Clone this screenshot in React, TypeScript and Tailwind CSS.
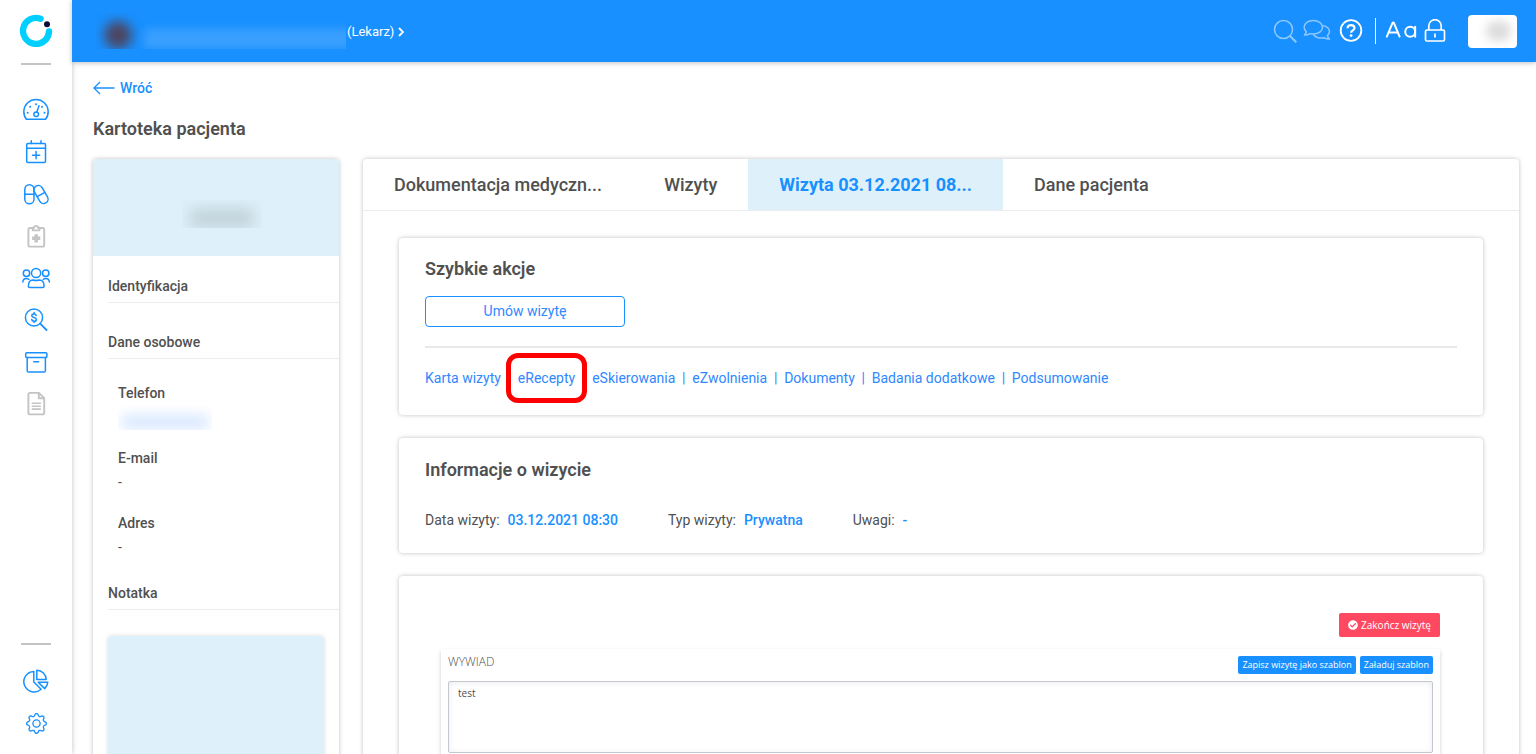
import { ReactNode, useState } from "react";
import { CaseSensitive } from "lucide-react";
import { BsGear } from "react-icons/bs";
import { FaCheckCircle } from "react-icons/fa";

function NavIcon({ children, muted }: { children: ReactNode; muted?: boolean }) {
  return (
    <svg
      viewBox="0 0 28 28"
      className={`size-7 ${muted ? "text-[#c4c4c4]" : "text-[#1890ff]"}`}
      fill="none"
      stroke="currentColor"
      strokeWidth={muted ? 1.9 : 1.5}
      strokeLinecap="round"
      strokeLinejoin="round"
      aria-hidden="true"
    >
      {children}
    </svg>
  );
}

const navItems = [
  {
    label: "Pulpit",
    icon: (
      <NavIcon>
        <path d="M4.4 23.3A12.2 12.2 0 1 1 23.6 23.3Z" />
        <circle cx="14.2" cy="18.2" r="2.3" />
        <path d="M14.9 15.8L17 9.7" />
        <g fill="currentColor" stroke="none">
          <circle cx="5.7" cy="16.7" r="1" />
          <circle cx="8.1" cy="10.8" r="1" />
          <circle cx="14" cy="8.3" r="1" />
          <circle cx="20" cy="10.8" r="1" />
          <circle cx="22.5" cy="16.7" r="1" />
        </g>
      </NavIcon>
    ),
  },
  {
    label: "Terminarz",
    icon: (
      <NavIcon>
        <rect x="4.7" y="5.6" width="18.8" height="18.8" rx="1.2" />
        <path d="M4.7 10.2h18.8M9.3 2.8v2.8M19 2.8v2.8M14.1 13.6v7.2M10.5 17.2h7.2" />
      </NavIcon>
    ),
  },
  {
    label: "Leki",
    icon: (
      <NavIcon>
        <rect x="2.8" y="4.8" width="9.2" height="19" rx="4.6" />
        <path d="M2.8 14.3h9.2" />
        <g transform="rotate(-30 19 14.5)">
          <rect x="14.6" y="4.8" width="8.8" height="19.4" rx="4.4" />
          <path d="M14.6 14.5h8.8" />
        </g>
      </NavIcon>
    ),
  },
  {
    label: "Zlecenia",
    icon: (
      <NavIcon muted>
        <rect x="6.4" y="6" width="15.8" height="18.6" rx="1.6" />
        <path d="M10.8 8.4V5.8h1.4a1.9 1.9 0 0 1 3.8 0h1.4v2.6z" fill="white" />
        <path d="M14.2 12.2v8.2M10.1 16.3h8.2" strokeWidth="3.4" strokeLinecap="butt" />
      </NavIcon>
    ),
  },
  {
    label: "Pacjenci",
    icon: (
      <NavIcon>
        <circle cx="14.1" cy="9" r="4.6" />
        <path d="M6.4 22.2c0-4.2 1.6-6.2 4.6-6.2 1.8.6 4.4.6 6.2 0 3 0 4.9 2 4.9 6.2 0 .9-.5 1.4-1.4 1.4H7.8c-.9 0-1.4-.5-1.4-1.4z" />
        <circle cx="4.5" cy="9.3" r="3.2" />
        <circle cx="23.7" cy="9.3" r="3.2" />
        <path d="M.8 18c.3-2.3 1.5-3.5 3.4-3.5 1.1 0 1.9.2 2.7.8M27.4 18c-.3-2.3-1.5-3.5-3.4-3.5-1.1 0-1.9.2-2.7.8" />
      </NavIcon>
    ),
  },
  {
    label: "Rozliczenia",
    icon: (
      <NavIcon>
        <circle cx="12" cy="11.5" r="8.6" />
        <path d="M18.2 17.7l6.3 6.3" strokeWidth="1.8" />
        <path d="M14.2 9.5c-.2-1-1-1.5-2.200-1.5-1.300 0-2.200.6-2.200 1.700 0 2.500 4.600 1.200 4.600 3.700 0 1.100-.9 1.800-2.300 1.800-1.300 0-2.200-.6-2.400-1.700M12.1 6.600V8M12.1 15.200v1.400" />
      </NavIcon>
    ),
  },
  {
    label: "Archiwum",
    icon: (
      <NavIcon>
        <rect x="3.7" y="4.8" width="21.2" height="4.7" rx="1" />
        <path d="M5.2 9.5v13.2c0 .8.5 1.3 1.3 1.3h15.6c.8 0 1.3-.5 1.3-1.3V9.5M11.8 13.7h4.8" />
      </NavIcon>
    ),
  },
  {
    label: "Dokumenty",
    icon: (
      <NavIcon muted>
        <path d="M17 2.9H8c-1 0-1.6.6-1.6 1.6v18.3c0 1 .6 1.6 1.6 1.6h12.6c1 0 1.6-.6 1.6-1.6V8.2zM16.8 3v5.3h5.3" />
        <path d="M10.3 13.3h8M10.3 16.2h8M10.3 19.1h8" strokeWidth="1.6" />
      </NavIcon>
    ),
  },
];

const bottomItems = [
  {
    label: "Raporty",
    icon: (
      <NavIcon>
        <path d="M11.8 4.4V15l7.3 7.3A10.3 10.3 0 1 1 11.8 4.4z" />
        <path d="M14.8 3.2v9.4h9.4a9.4 9.4 0 0 0-9.4-9.4z" />
        <path d="M16.2 15.3h9.6c-.2 2.5-1.3 4.6-3.1 6.300z" />
      </NavIcon>
    ),
  },
  { label: "Ustawienia", icon: <BsGear size={21} className="text-[#1890ff]" /> },
];

const tabs = ["Dokumentacja medyczn...", "Wizyty", "Wizyta 03.12.2021 08...", "Dane pacjenta"];

const quickLinks = [
  "Karta wizyty",
  "eRecepty",
  "eSkierowania",
  "eZwolnienia",
  "Dokumenty",
  "Badania dodatkowe",
  "Podsumowanie",
];

const visitInfo = [
  { label: "Data wizyty:", value: "03.12.2021 08:30" },
  { label: "Typ wizyty:", value: "Prywatna" },
  { label: "Uwagi:", value: "-" },
];

function Sidebar() {
  return (
    <aside className="z-10 flex w-18 shrink-0 flex-col items-center bg-white shadow-[0_0_5px_rgba(0,0,0,0.25)]">
      <svg viewBox="0 0 34 34" className="mt-3.5 size-[34px] shrink-0" aria-hidden="true">
        <path d="M21.5 4.7A13 13 0 1 0 30 17.5" fill="none" stroke="#00cfff" strokeWidth="6.4" strokeLinecap="round" />
        <circle cx="28" cy="10.3" r="3" fill="#0b0b33" />
      </svg>
      <div className="mt-[15px] h-0.5 w-[30px] shrink-0 bg-[#c4c4c4]" />
      <nav className="mt-[31px] flex flex-col gap-3.5">
        {navItems.map((item) => (
          <a key={item.label} href="#" aria-label={item.label}>
            {item.icon}
          </a>
        ))}
      </nav>
      <div className="mt-auto h-0.5 w-[30px] shrink-0 bg-[#c4c4c4]" />
      <nav className="mt-[22px] mb-[17px] flex flex-col gap-3.5">
        {bottomItems.map((item) => (
          <a key={item.label} href="#" aria-label={item.label} className="flex size-7 items-center justify-center">
            {item.icon}
          </a>
        ))}
      </nav>
    </aside>
  );
}

function Header() {
  return (
    <header className="z-10 flex h-[62px] shrink-0 items-center bg-[#1890ff] pr-[19px] pl-6 text-white shadow-[0_1px_5px_rgba(0,0,0,0.25)]">
      {/* Blurred avatar and name */}
      <div className="flex h-9 w-[250px] items-end overflow-hidden">
        <div className="ml-2 size-7 shrink-0 rounded-full bg-[#4d4560] blur-[6px]" />
        <div className="ml-3 -mr-2 h-5 grow bg-white/15 blur-[5px]" />
      </div>
      <button type="button" className="flex items-center gap-1 pt-px pl-px text-[13px]">
        (Lekarz)
        <svg viewBox="0 0 6 10" className="h-2.5 w-1.5" fill="none" stroke="currentColor" strokeWidth="1.8" aria-hidden="true">
          <path d="M1 1l4 4-4 4" />
        </svg>
      </button>
      <div className="ml-auto flex items-center">
        <button type="button" aria-label="Szukaj" className="mr-1.5 opacity-50">
          <svg viewBox="0 0 24 24" className="size-6" fill="none" stroke="currentColor" strokeWidth="1.5" aria-hidden="true">
            <circle cx="10.5" cy="10.5" r="9" />
            <path d="M17 17l6.3 6.3" strokeWidth="2" />
          </svg>
        </button>
        <button type="button" aria-label="Wiadomości" className="mr-2 opacity-50">
          <svg viewBox="0 0 28 24" className="h-6 w-7" fill="none" stroke="currentColor" strokeWidth="1.5" strokeLinejoin="round" aria-hidden="true">
            <path d="M10.3 1.5c5 0 9.2 2.900 9.200 6.800s-4.200 6.800-9.200 6.800c-1.200 0-2.300-.2-3.300-.5-1.600 1.100-3.400 1.600-5.600 1.500 1.200-1 1.800-2.200 1.900-3.500C1.900 11.400 1.100 9.900 1.100 8.300c0-3.900 4.200-6.800 9.200-6.800z" />
            <path d="M19.4 6.500c4.100.3 7.100 2.900 7.100 6 0 1.600-.8 3-2.100 4.100.2 1.300.9 2.500 2.100 3.500-2.200.1-4-.4-5.500-1.400-4.700 1.200-9.200-.4-10.800-3.600" />
          </svg>
        </button>
        <button type="button" aria-label="Pomoc">
          <svg viewBox="0 0 24 24" className="size-6" fill="none" stroke="currentColor" strokeWidth="1.8" aria-hidden="true">
            <circle cx="12" cy="11.5" r="10.3" />
            <path d="M8.6 9.200c0-2 1.400-3.100 3.400-3.100s3.500 1.100 3.500 2.900c0 2.300-3.400 2.400-3.400 4.700" strokeWidth="2.2" />
            <circle cx="12.1" cy="16.600" r="1.400" fill="currentColor" stroke="none" />
          </svg>
        </button>
        <div className="ml-3 h-[26px] w-px bg-white" />
        <button type="button" aria-label="Rozmiar tekstu" className="ml-2">
          <CaseSensitive size={34} strokeWidth={1.4} />
        </button>
        <button type="button" aria-label="Zablokuj" className="ml-1.5">
          <svg viewBox="0 0 22 24" className="h-6 w-[22px]" fill="none" stroke="currentColor" strokeWidth="1.7" aria-hidden="true">
            <rect x="1.5" y="11" width="19" height="11" rx="1.5" />
            <path d="M4.8 11V6.900a6.200 6.200 0 0 1 12.400 0V11M11 14.500v4" />
          </svg>
        </button>
        <button type="button" aria-label="Konto" className="ml-[22px] h-[33px] w-[49px] overflow-hidden rounded bg-white p-1.5">
          <span className="ml-3 block h-5 rounded-full bg-[#dcdcdc] blur-[5px]" />
        </button>
      </div>
    </header>
  );
}

function SectionTitle({ children }: { children: ReactNode }) {
  return <h3 className="ml-[15px] h-[25px] border-b border-[#ececec] text-sm leading-4 font-medium">{children}</h3>;
}

function PatientCard() {
  return (
    <section className="w-[246px] shrink-0 overflow-hidden rounded bg-white shadow-[0_0_4px_rgba(0,0,0,0.25)]">
      <div className="flex h-[97px] items-center justify-center bg-[#def0fa]">
        <div className="mt-3 ml-3 flex h-7 w-20 items-end overflow-hidden">
          <div className="mx-2 h-5 w-full bg-[#c3d3da] blur-[7px]" />
        </div>
      </div>
      <div className="pt-[22px]">
        <SectionTitle>Identyfikacja</SectionTitle>
      </div>
      <div className="pt-[31px]">
        <SectionTitle>Dane osobowe</SectionTitle>
      </div>
      <dl className="mt-[26px] ml-[25px] text-sm leading-4">
        <dt className="font-medium">Telefon</dt>
        <dd className="mt-1 mb-5 flex h-[25px] w-[94px] items-end overflow-hidden">
          <div className="mx-1 h-4 w-full bg-[#dceaff] blur-[6px]" />
        </dd>
        <dt className="font-medium">E-mail</dt>
        <dd className="mt-2 mb-[25px]">-</dd>
        <dt className="font-medium">Adres</dt>
        <dd className="mt-2">-</dd>
      </dl>
      <div className="pt-[30px]">
        <SectionTitle>Notatka</SectionTitle>
      </div>
      <div className="mx-[15px] mt-[26px] mb-4 h-44 rounded bg-[#def0fa] shadow-[0_0_4px_rgba(0,0,0,0.15)]" />
    </section>
  );
}

function Card({ children, className = "" }: { children: ReactNode; className?: string }) {
  return <section className={`rounded bg-white shadow-[0_0_4px_rgba(0,0,0,0.25)] ${className}`}>{children}</section>;
}

function QuickActions() {
  return (
    <Card className="px-[26px] pt-[19px] pb-[27px]">
      <h2 className="text-lg leading-6 font-semibold">Szybkie akcje</h2>
      <button
        type="button"
        className="mt-[15px] h-[31px] w-[200px] rounded border border-[#1890ff] pb-0.5 text-sm text-[#2f88ff]"
      >
        Umów wizytę
      </button>
      <hr className="mt-[19px] border-t-2 border-[#e8e8e8]" />
      <ul className="mt-5 flex flex-wrap text-sm leading-5 text-[#2f88ff]">
        {quickLinks.map((link, i) => (
          <li key={link} className="flex">
            {i > 0 && <span className="w-[17px] text-center">|</span>}
            <span className="relative">
              <a href="#">{link}</a>
              {link === "eRecepty" && (
                <span className="pointer-events-none absolute -inset-x-3 -inset-y-[15px] rounded-xl border-5 border-[#fe0000]" />
              )}
            </span>
          </li>
        ))}
      </ul>
    </Card>
  );
}

function VisitInfo() {
  return (
    <Card className="px-[26px] pt-5 pb-[23px]">
      <h2 className="text-lg leading-6 font-semibold">Informacje o wizycie</h2>
      <dl className="mt-7 flex flex-wrap gap-x-[50px] text-sm leading-5">
        {visitInfo.map((item) => (
          <div key={item.label} className="flex gap-2">
            <dt>{item.label}</dt>
            <dd className="font-medium text-[#1890ff]">{item.value}</dd>
          </div>
        ))}
      </dl>
    </Card>
  );
}

function Interview() {
  const [text, setText] = useState("test");

  return (
    <Card className="pt-[37px] pr-[43px] pb-10 pl-[42px] font-['Open_Sans',sans-serif]">
      <div className="flex justify-end">
        <button
          type="button"
          className="flex h-6 items-center gap-[3px] rounded-xs bg-[#ff4961] px-[9px] text-[10px] text-white"
        >
          <FaCheckCircle size={10} />
          Zakończ wizytę
        </button>
      </div>
      <div className="mt-3 px-[7px] pt-[7px] pb-5 shadow-[0_2px_4px_rgba(0,0,0,0.2)]">
        <div className="flex items-start gap-1">
          <label htmlFor="interview" className="mr-auto text-xs leading-3 font-light">
            WYWIAD
          </label>
          <button type="button" className="h-[18px] rounded-xs bg-[#1890ff] px-1 text-[9px] text-white">
            Zapisz wizytę jako szablon
          </button>
          <button type="button" className="h-[18px] rounded-xs bg-[#1890ff] px-1 text-[9px] text-white">
            Załaduj szablon
          </button>
        </div>
        <textarea
          id="interview"
          value={text}
          onChange={(e) => setText(e.target.value)}
          className="mt-[7px] block h-[72px] w-full resize-none rounded-xs border border-[#c3c8d0] px-[9px] py-[3px] text-[10px] leading-4 shadow-[inset_0_1px_6px_rgba(0,0,0,0.08)] outline-none"
        />
      </div>
    </Card>
  );
}

export default function App() {
  const [activeTab, setActiveTab] = useState(2);

  return (
    <div className="flex h-screen overflow-hidden bg-white font-[Roboto,sans-serif] text-[#505050]">
      <Sidebar />
      <div className="flex min-w-0 grow flex-col">
        <Header />
        <main className="min-h-0 grow overflow-hidden pt-4 pr-[17px] pl-[21px]">
          <a href="#" className="inline-flex items-center gap-[5px] text-sm leading-5 font-medium text-[#1890ff]">
            <svg viewBox="0 0 22 14" className="h-3.5 w-[22px]" fill="none" stroke="currentColor" strokeWidth="1.3" aria-hidden="true">
              <path d="M7 1L1 7l6 6M1 7h20.5" />
            </svg>
            Wróć
          </a>
          <h1 className="mt-[15px] text-lg leading-6 font-semibold">Kartoteka pacjenta</h1>
          <div className="mt-[18px] flex items-start gap-6">
            <PatientCard />
            <Card className="min-w-0 grow">
              <div role="tablist" className="flex h-[52px] border-b border-[#ececec] text-lg font-medium">
                {tabs.map((tab, i) => (
                  <button
                    key={tab}
                    type="button"
                    role="tab"
                    aria-selected={i === activeTab}
                    onClick={() => setActiveTab(i)}
                    className={`px-[31px] ${i === activeTab ? "bg-[#def0fa] font-bold text-[#1890ff]" : ""}`}
                  >
                    {tab}
                  </button>
                ))}
              </div>
              <div className="flex flex-col gap-[23px] px-9 pt-[27px] pb-8">
                <QuickActions />
                <VisitInfo />
                <Interview />
              </div>
            </Card>
          </div>
        </main>
      </div>
    </div>
  );
}
